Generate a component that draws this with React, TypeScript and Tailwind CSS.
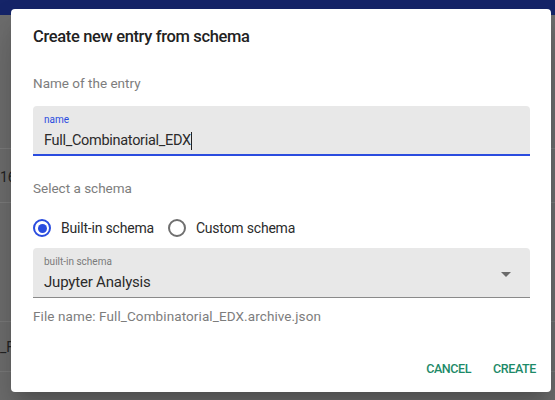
import React from 'react';

const font = { fontFamily: 'Roboto, "Noto Sans", sans-serif' };

function Radio({ checked, label }: { checked: boolean; label: string }) {
  return (
    <div className="flex items-center gap-[10px]">
      <span
        className={`flex h-[18px] w-[18px] items-center justify-center rounded-full border-2 ${
          checked ? 'border-[#2a4cdf]' : 'border-[#6f6f6f]'
        }`}
      >
        {checked && <span className="h-[9px] w-[9px] rounded-full bg-[#2a4cdf]" />}
      </span>
      <span className="text-[14px] text-[#2b2b2b] tracking-[-0.2px]">{label}</span>
    </div>
  );
}

export default function App() {
  return (
    <div className="relative h-[400px] w-[555px] overflow-hidden bg-[#6c6c6c]" style={font}>
      {/* Page behind the modal (dimmed) */}
      <div className="flex h-full flex-col">
        <div className="h-[15px] shrink-0 bg-[#152468]" />
        <div className="h-[134px] border-b border-[#7a7a7a]" />
        <div className="h-[54px] border-b border-[#7a7a7a] text-[14px] text-[#222] leading-[56px]">16</div>
        <div className="h-[119px] border-b border-[#787878]" />
        <div className="h-[50px] border-b border-[#787878] text-[14px] text-[#222] leading-[50px]">_F</div>
      </div>

      {/* Dialog */}
      <div className="absolute left-[11px] top-[9px] flex h-[383px] w-[540px] flex-col rounded-[4px] bg-white shadow-[0_11px_15px_-7px_rgba(0,0,0,0.2),0_24px_38px_3px_rgba(0,0,0,0.14)]">
        <div className="pl-[22px] pr-[21px] pt-[16px]">
          <h2 className="h-[24px] text-[16.5px] font-medium leading-[24px] text-[#222] tracking-[-0.35px]">
            Create new entry from schema
          </h2>

          <p className="mt-[24px] h-[20px] text-[13.5px] leading-[20px] text-[#7d7d7d]">Name of the entry</p>

          <div className="mt-[13px] flex h-[50px] flex-col rounded-t-[4px] border-b-2 border-[#2a4cdf] bg-[#e8e8e8] px-[11px] pt-[8px]">
            <span className="text-[10px] leading-[12px] text-[#2a4cdf]">name</span>
            <span className="mt-[5px] flex items-center text-[14.5px] leading-[20px] text-[#2b2b2b] tracking-[-0.3px]">
              Full_Combinatorial_EDX
              <span className="h-[18px] w-px bg-[#222]" />
            </span>
          </div>

          <p className="mt-[22px] h-[20px] text-[13.5px] leading-[20px] text-[#7d7d7d]">Select a schema</p>

          <div className="mt-[18px] flex h-[24px] items-center gap-[14px]">
            <Radio checked label="Built-in schema" />
            <Radio checked={false} label="Custom schema" />
          </div>

          <div className="mt-[8px] flex h-[50px] items-start rounded-t-[4px] border-b border-[#8a8a8a] bg-[#e8e8e8] pl-[11px] pr-[12px] pt-[8px]">
            <div className="flex flex-1 flex-col">
              <span className="text-[10px] leading-[12px] text-[#7a7a7a]">built-in schema</span>
              <span className="mt-[4px] text-[15px] leading-[20px] text-[#2b2b2b] tracking-[-0.2px]">Jupyter Analysis</span>
            </div>
            <svg viewBox="0 0 24 24" className="mt-[6px] h-[24px] w-[24px] fill-[#6a6a6a]">
              <path d="M7 10l5 5 5-5z" />
            </svg>
          </div>

          <p className="mt-[8px] h-[20px] text-[13.5px] leading-[20px] text-[#7d7d7d] tracking-[0.1px]">
            File name: Full_Combinatorial_EDX.archive.json
          </p>
        </div>

        <div className="mt-auto flex justify-end gap-[6px] pb-[8px] pr-[7px]">
          <button className="h-[30px] rounded px-[8px] text-[12.5px] font-medium text-[#1d8a68] tracking-[-0.4px]">CANCEL</button>
          <button className="h-[30px] rounded px-[8px] text-[12.5px] font-medium text-[#1d8a68] tracking-[-0.4px]">CREATE</button>
        </div>
      </div>
    </div>
  );
}
